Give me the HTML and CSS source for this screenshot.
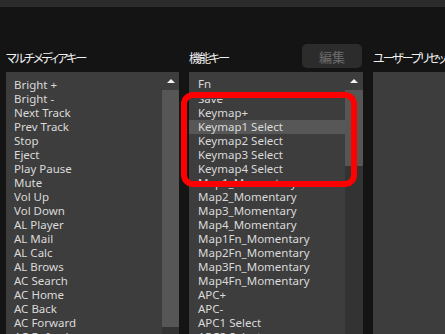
FILE: index.html
```html
<!DOCTYPE html>
<html lang="ja">
<head>
  <meta charset="UTF-8">
  <meta name="viewport" content="width=device-width, initial-scale=1.0">
  <link rel="stylesheet" href="styles.css">
</head>
<body>
  <div class="topbar"></div>
  <div class="panes">
    <div class="pane pane-media">
      <div class="pane-head">
        <span class="pane-title">マルチメディアキー</span>
      </div>
      <div class="listbox">
        <ul class="items">
          <li>Bright +</li>
          <li>Bright -</li>
          <li>Next Track</li>
          <li>Prev Track</li>
          <li>Stop</li>
          <li>Eject</li>
          <li>Play Pause</li>
          <li>Mute</li>
          <li>Vol Up</li>
          <li>Vol Down</li>
          <li>AL Player</li>
          <li>AL Mail</li>
          <li>AL Calc</li>
          <li>AL Brows</li>
          <li>AC Search</li>
          <li>AC Home</li>
          <li>AC Back</li>
          <li>AC Forward</li>
          <li>AC Refresh</li>
        </ul>
        <div class="scrollbar">
          <div class="arrow-up"></div>
          <div class="thumb thumb-media"></div>
        </div>
      </div>
    </div>

    <div class="pane pane-func">
      <div class="pane-head">
        <span class="pane-title">機能キー</span>
        <button class="edit-btn">編集</button>
      </div>
      <div class="listbox">
        <div class="list-col">
          <div class="fixed-item">Fn</div>
          <div class="viewport">
            <ul class="items items-scrolled">
              <li>Save</li>
              <li>Keymap+</li>
              <li class="selected">Keymap1 Select</li>
              <li>Keymap2 Select</li>
              <li>Keymap3 Select</li>
              <li>Keymap4 Select</li>
              <li>Map1_Momentary</li>
              <li>Map2_Momentary</li>
              <li>Map3_Momentary</li>
              <li>Map4_Momentary</li>
              <li>Map1Fn_Momentary</li>
              <li>Map2Fn_Momentary</li>
              <li>Map3Fn_Momentary</li>
              <li>Map4Fn_Momentary</li>
              <li>APC+</li>
              <li>APC-</li>
              <li>APC1 Select</li>
              <li>APC2 Select</li>
            </ul>
          </div>
        </div>
        <div class="scrollbar">
          <div class="arrow-up"></div>
          <div class="thumb thumb-func"></div>
        </div>
        <div class="callout"></div>
      </div>
    </div>

    <div class="pane pane-preset">
      <div class="pane-head">
        <span class="pane-title">ユーザープリセット</span>
      </div>
      <div class="listbox"></div>
    </div>
  </div>
</body>
</html>
```

FILE: styles.css
```css
:root {
  --bg: #141414;
  --topbar: #2b2b2b;
  --list-bg: #3d3d3d;
  --track: #333333;
  --thumb: #565656;
  --text: #dadada;
}

html, body {
  height: 100%;
}

body {
  margin: 0;
  background-color: var(--bg);
  color: var(--text);
  font-family: "Noto Sans", "Noto Sans CJK JP", sans-serif;
  font-size: 11.5px;
  overflow: hidden;
}

.topbar {
  height: 7px;
  background-color: var(--topbar);
}

.panes {
  display: flex;
  gap: 10px;
  padding: 37px 0 0 6px;
}

.pane {
  display: flex;
  flex-direction: column;
  flex-shrink: 0;
}

.pane-media {
  width: 173px;
}

.pane-func {
  width: 174px;
}

.pane-preset {
  width: 140px;
}

.pane-head {
  display: flex;
  justify-content: space-between;
  align-items: flex-start;
  height: 28px;
}

.pane-title {
  margin-top: 6px;
  font-family: "Noto Sans CJK JP", sans-serif;
  font-feature-settings: "palt";
  font-size: 12px;
  letter-spacing: -2px;
  line-height: 16px;
  color: #f0f0f0;
  white-space: nowrap;
}

.edit-btn {
  width: 60px;
  height: 24px;
  margin-right: 1px;
  border: none;
  border-radius: 5px;
  background-color: #2c2c2c;
  color: #6c6c6c;
  font-family: "Noto Sans CJK JP", sans-serif;
  font-size: 13px;
  padding: 0;
}

.listbox {
  position: relative;
  display: flex;
  height: 270px;
  background-color: var(--list-bg);
}

.items {
  flex: 1;
  margin: 0;
  padding: 6px 0 0 0;
  list-style: none;
}

.items li {
  height: 14px;
  line-height: 14px;
  padding-left: 8px;
  white-space: nowrap;
}

.items li.selected {
  background-color: #575757;
}

.list-col {
  flex: 1;
  display: flex;
  flex-direction: column;
}

.fixed-item {
  height: 14px;
  line-height: 14px;
  margin-top: 5px;
  padding-left: 9px;
}

.viewport {
  flex: 1;
  margin-top: 8px;
  overflow: hidden;
}

.items-scrolled {
  padding-top: 0;
  margin-top: -7px;
}

.items-scrolled li {
  padding-left: 9px;
}

.scrollbar {
  width: 17px;
  display: flex;
  flex-direction: column;
  background-color: var(--track);
}

.pane-func .scrollbar {
  width: 18px;
}

.arrow-up {
  height: 18px;
  position: relative;
  background-color: var(--list-bg);
}

.arrow-up::after {
  content: "";
  position: absolute;
  left: 50%;
  top: 7px;
  margin-left: -4px;
  border-left: 4px solid transparent;
  border-right: 4px solid transparent;
  border-bottom: 4px solid #f4f4f4;
}

.thumb {
  background-color: var(--thumb);
}

.thumb-media {
  height: 237px;
}

.thumb-func {
  height: 76px;
}

.callout {
  position: absolute;
  left: -8px;
  top: 20px;
  width: 164px;
  height: 83px;
  border: 6px solid #ff0000;
  border-radius: 12px;
}
```
